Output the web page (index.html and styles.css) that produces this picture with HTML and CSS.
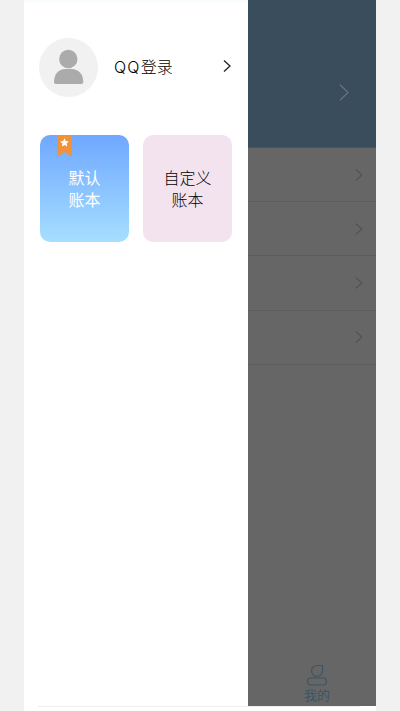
FILE: index.html
```html
<!DOCTYPE html>
<html lang="zh">
<head>
<meta charset="utf-8">
<title>我的</title>
<link rel="stylesheet" href="styles.css">
</head>
<body>
<div class="phone">
  <div class="screen">
    <aside class="drawer">
      <div class="login">
        <div class="avatar">
          <svg viewBox="0 0 59 59" width="59" height="59"><circle cx="29.300" cy="21" r="9.200" fill="#ababab"/><path d="M15 44c0-8 5-13 11-13h7c6 0 11.300 5 11.300 13 0 1.200-.8 2-2 2H17c-1.200 0-2-.8-2-2z" fill="#ababab"/></svg>
        </div>
        <span class="login-name"><span class="login-qq">QQ</span>登录</span>
        <svg class="login-arrow" viewBox="0 0 8 14" width="8" height="14"><path d="M1 1.500 7 7l-6 5.500" fill="none" stroke="#222" stroke-width="1.300"/></svg>
      </div>
      <div class="books">
        <div class="book book-default">
          <svg class="ribbon" viewBox="0 0 15 22" width="15" height="22"><path d="M0 0h15v22l-7.500-5L0 22z" fill="#f0923a"/><path d="M7.500 3.200l1.300 2.800 3 .4-2.200 2.100.6 3-2.700-1.500-2.700 1.500.6-3-2.200-2.100 3-.4z" fill="#fff"/></svg>
          <span>默认<br>账本</span>
        </div>
        <div class="book book-custom"><span>自定义<br>账本</span></div>
      </div>
    </aside>
    <main class="backdrop">
      <div class="hero">
        <svg class="chevron-large" viewBox="0 0 10 17" width="10" height="17"><path d="M1 .8 9 8.500 1 16.200" fill="none" stroke="#6e7478" stroke-width="1.200"/></svg>
      </div>
      <div class="row"><svg viewBox="0 0 8 12" width="8" height="12"><path d="M.7.700 7 6 .7 11.300" fill="none" stroke="#484848" stroke-width="1"/></svg></div>
      <div class="row"><svg viewBox="0 0 8 12" width="8" height="12"><path d="M.7.700 7 6 .7 11.300" fill="none" stroke="#484848" stroke-width="1"/></svg></div>
      <div class="row"><svg viewBox="0 0 8 12" width="8" height="12"><path d="M.7.700 7 6 .7 11.300" fill="none" stroke="#484848" stroke-width="1"/></svg></div>
      <div class="row"><svg viewBox="0 0 8 12" width="8" height="12"><path d="M.7.700 7 6 .7 11.300" fill="none" stroke="#484848" stroke-width="1"/></svg></div>
      <div class="spacer"></div>
      <div class="tab">
        <svg viewBox="0 0 22 22" width="22" height="22"><path d="M16.500 1.500H11a5.500 5.500 0 0 0 0 11 5.500 5.500 0 0 0 5.500-5.500z" fill="none" stroke="#3d5566" stroke-width="1.200"/><rect x="1.500" y="14" width="19" height="7" rx="3.500" fill="none" stroke="#3d5566" stroke-width="1.200"/></svg>
        <span>我的</span>
      </div>
    </main>
  </div>
  <div class="footer"><div class="footer-line"></div></div>
</div>
</body>
</html>
```
FILE: styles.css
```css
* { box-sizing: border-box; }
html, body { margin: 0; height: 100%; }
body {
  background: #f1f1f1;
  display: flex;
  justify-content: center;
  font-family: "Noto Sans CJK SC", "Noto Sans", sans-serif;
  font-weight: 300;
  overflow: hidden;
}
.phone {
  width: 352px;
  height: 711px;
  background: #fff;
  display: flex;
  flex-direction: column;
}
.screen { flex: 1; display: flex; min-height: 0; }
.drawer {
  width: 224px;
  background: linear-gradient(#f8fdfb, #fff 5px);
  padding: 38px 16px 0 15px;
}
.login { display: flex; align-items: center; height: 59px; }
.avatar {
  width: 59px;
  height: 59px;
  border-radius: 50%;
  background: #f1f1f1;
  flex: none;
}
.avatar svg, .login-arrow { display: block; }
.login-name {
  margin-left: 16px;
  font-size: 16px;
  line-height: 22px;
  color: #000;
  flex: 1;
  margin-top: -2px;
}
.login-qq { font-family: "Inter", sans-serif; font-weight: 300; letter-spacing: 1.200px; }
.login-arrow { margin-right: 1px; margin-top: -3px; flex: none; }
.books { display: flex; gap: 14px; margin: 38px 0 0 1px; }
.book {
  position: relative;
  width: 89px;
  height: 107px;
  border-radius: 10px;
  display: flex;
  align-items: center;
  justify-content: center;
  text-align: center;
  font-size: 16px;
  line-height: 22px;
  padding-bottom: 2px;
}
.book-default { background: linear-gradient(#6fa8ff, #a6deff); color: #fff; font-weight: 400; }
.book-custom { background: #f3e3ee; color: #000; }
.ribbon { position: absolute; left: 17px; top: 0; }
.backdrop {
  flex: 1;
  background: #666;
  display: flex;
  flex-direction: column;
}
.hero {
  height: 148px;
  background: #394d5c;
  border-bottom: 1px solid #415566;
  display: flex;
  justify-content: flex-end;
  align-items: center;
  padding: 38px 27px 0 0;
  flex: none;
}
.row {
  height: 54.200px;
  border-bottom: 1px solid #5d5d5d;
  display: flex;
  align-items: center;
  justify-content: flex-end;
  padding-right: 13px;
  flex: none;
}
.spacer { flex: 1; }
.tab {
  display: flex;
  flex-direction: column;
  align-items: center;
  color: #3d5566;
  font-size: 13px;
  font-weight: 400;
  line-height: 16px;
  padding-bottom: 3px;
  margin-left: 10px;
}
.tab svg { display: block; margin-bottom: 1px; }
.footer { height: 5px; flex: none; }
.footer-line { height: 1px; width: 322px; margin-left: 14px; background: #eeeeee; }
```
